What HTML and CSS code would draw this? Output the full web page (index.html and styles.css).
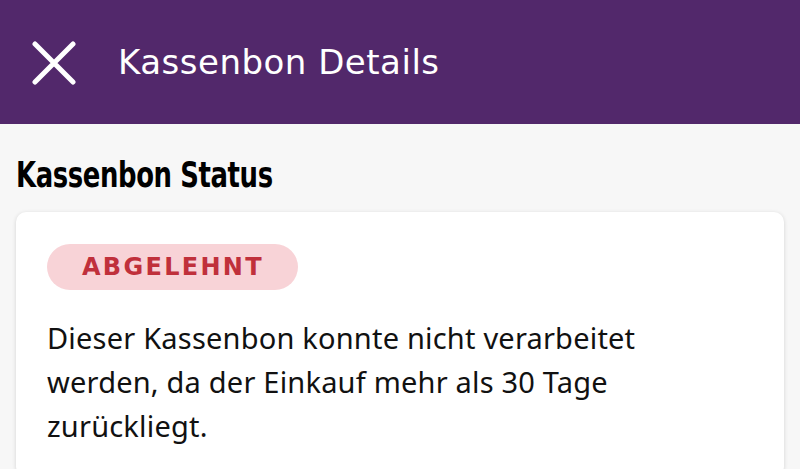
FILE: index.html
```html
<!DOCTYPE html>
<html lang="de">
<head>
<meta charset="utf-8">
<link rel="stylesheet" href="styles.css">
</head>
<body>
<header class="appbar">
  <button class="close" aria-label="Schließen">
    <svg width="44" height="44" viewBox="0 0 44 44"><path d="M3 3 L41 41 M41 3 L3 41" stroke="#fff" stroke-width="5" stroke-linecap="round" fill="none"/></svg>
  </button>
  <h1 class="title">Kassenbon Details</h1>
</header>
<main class="content">
  <h2 class="section-title">Kassenbon Status</h2>
  <section class="card">
    <span class="badge">ABGELEHNT</span>
    <p class="message">Dieser Kassenbon konnte nicht verarbeitet werden, da der Einkauf mehr als 30 Tage zurückliegt.</p>
  </section>
</main>
</body>
</html>
```
FILE: styles.css
```css
html, body { margin: 0; padding: 0; }
body {
  width: 800px;
  height: 469px;
  overflow: hidden;
  background: #f7f7f7;
  font-family: "Noto Sans", sans-serif;
}
.appbar {
  height: 124px;
  background: #52286b;
  display: flex;
  align-items: center;
  padding-left: 32px;
  box-sizing: border-box;
}
.close {
  background: none;
  border: 0;
  padding: 0;
  width: 44px;
  height: 44px;
  display: flex;
  margin-top: 2px;
}
.title {
  margin: 0 0 0 42px;
  color: #fff;
  font-family: "DejaVu Sans", sans-serif;
  font-weight: 400;
  font-size: 34px;
  letter-spacing: 0.5px;
}
.content { padding: 0 16px; }
.section-title {
  margin: 30px 0 16px;
  font-family: "DejaVu Sans Condensed", "DejaVu Sans", sans-serif;
  font-weight: 700;
  font-size: 36px;
  line-height: 42px;
  color: #000;
  letter-spacing: -0.5px;
  transform: scaleX(0.8);
  transform-origin: left center;
}
.card {
  background: #fff;
  border-radius: 10px;
  box-shadow: 0 1px 4px rgba(0,0,0,0.15);
  padding: 32px 31px 28px;
}
.badge {
  display: inline-block;
  background: #f8d3d7;
  color: #c0303b;
  font-family: "DejaVu Sans", sans-serif;
  font-weight: 700;
  font-size: 24px;
  line-height: 46px;
  padding: 0 34px 0 35px;
  border-radius: 23px;
  letter-spacing: 2.3px;
}
.message {
  margin: 26px 0 0;
  max-width: 660px;
  font-size: 29px;
  line-height: 44px;
  letter-spacing: 0.2px;
  color: #111;
}
```
